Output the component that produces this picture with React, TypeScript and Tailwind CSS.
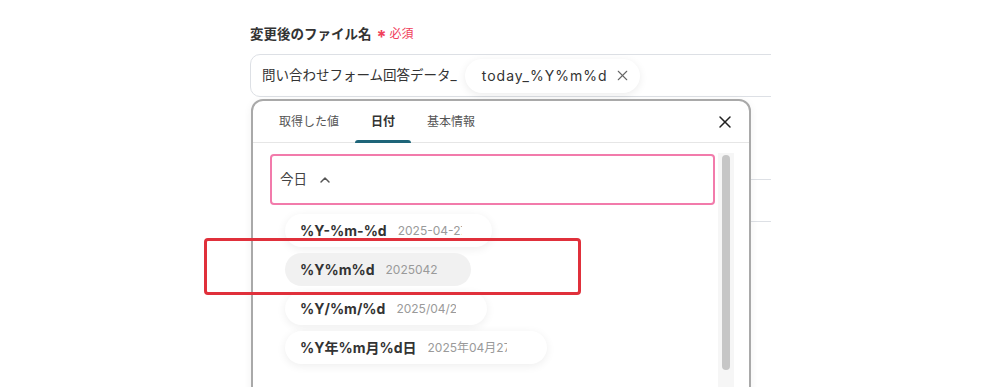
import { X, ChevronUp } from "lucide-react";

const FONT = "font-['Inter','Noto_Sans_CJK_JP',sans-serif]";

const formats = [
  { key: "%Y-%m-%d", sample: "2025-04-27", clip: "w-[64px]", pr: "pr-[30px]", active: false },
  { key: "%Y%m%d", sample: "20250427", clip: "w-[52px]", pr: "pr-[33px]", active: true },
  { key: "%Y/%m/%d", sample: "2025/04/27", clip: "w-[60px]", pr: "pr-[31px]", active: false },
  { key: "%Y年%m月%d日", sample: "2025年04月27日", clip: "w-[79px]", pr: "pr-[40px]", active: false },
];

function FormatChip({ item }: { item: (typeof formats)[number] }) {
  return (
    <div
      className={`flex items-center h-[33px] rounded-full pl-[15px] ${item.pr} ${
        item.active ? "bg-[#f1f1f1]" : "bg-white shadow-[0_2px_10px_rgba(0,0,0,0.07)]"
      }`}
    >
      <span className="text-[14px] font-bold text-[#333] whitespace-nowrap">{item.key}</span>
      <span className={`ml-[11px] ${item.clip} overflow-hidden whitespace-nowrap text-[12px] text-[#9a9a9a]`}>
        {item.sample}
      </span>
    </div>
  );
}

export default function App() {
  return (
    <div className={`relative w-[1000px] h-[387px] overflow-hidden bg-white ${FONT}`}>
      {/* form behind the popup */}
      <div className="ml-[250px] w-[521px] overflow-hidden pt-[25px]">
        <div className="flex items-center h-[18px]">
          <span className="text-[13.5px] font-bold text-[#333]">変更後のファイル名</span>
          <span className="ml-[5px] text-[18px] font-bold text-[#f0405a] leading-none mt-[5px]">*</span>
          <span className="ml-[3px] text-[12px] text-[#f0405a]">必須</span>
        </div>
        <div className="mt-[11px] w-[560px] h-[43px] flex items-center border border-[#dde0e5] rounded-[10px] pl-[11px]">
          <span className="text-[13.5px] text-[#333]">問い合わせフォーム回答データ_</span>
          <div className="ml-[8px] flex items-center h-[34px] rounded-full bg-white shadow-[0_2px_8px_rgba(0,0,0,0.08)] pl-[17px] pr-[9px]">
            <span className="text-[14px] text-[#333] tracking-[1px]">today_%Y%m%d</span>
            <X size={17} strokeWidth={1.5} className="ml-[6px] text-[#666]" />
          </div>
        </div>
        <div className="mt-[82px] ml-[4px] w-[560px] h-[43px] border border-l-0 border-[#dde0e5]" />
      </div>

      {/* dropdown popup */}
      <div className="absolute left-[251px] top-[99px] w-[500px] h-[300px] bg-white border-2 border-[#a9a9a9] rounded-t-[12px] shadow-[0_2px_8px_rgba(0,0,0,0.06)]">
        <div className="flex items-stretch h-[42px] border-b border-[#e6e6e6] pl-[10px] pr-[14px]">
          <div className="px-[16px] flex items-center text-[12px] text-[#555]">取得した値</div>
          <div className="relative px-[16px] flex items-center text-[12px] font-bold text-[#333]">
            日付
            <span className="absolute left-0 right-0 bottom-[-1px] h-[3px] rounded-t bg-[#1e6579]" />
          </div>
          <div className="px-[16px] flex items-center text-[12px] text-[#555]">基本情報</div>
          <div className="flex-1" />
          <div className="flex items-center">
            <X size={20} strokeWidth={1.8} className="text-[#222]" />
          </div>
        </div>
        <div className="flex">
          <div className="flex-1 pl-[17px] pt-[11px]">
            <div className="w-[445px] h-[51px] border-2 border-[#f27bab] rounded-[4px] flex items-center pl-[8px]">
              <span className="text-[13.5px] text-[#444]">今日</span>
              <ChevronUp size={16} strokeWidth={2.2} className="ml-[10px] text-[#555]" />
            </div>
            <div className="pl-[15px] pt-[9px] flex flex-col items-start gap-[6px]">
              {formats.map((f) => (
                <FormatChip key={f.key} item={f} />
              ))}
            </div>
          </div>
          <div className="w-[16px] mr-[15px] mt-[10px] h-[240px] bg-[#f6f6f6] flex justify-center pt-[2px]">
            <div className="w-[8px] h-[215px] rounded-full bg-[#c6c6c6]" />
          </div>
        </div>
      </div>

      {/* highlight */}
      <div className="absolute left-[204px] top-[238px] w-[377px] h-[57px] border-[3px] border-[#e0303b] rounded-[4px]" />
    </div>
  );
}
